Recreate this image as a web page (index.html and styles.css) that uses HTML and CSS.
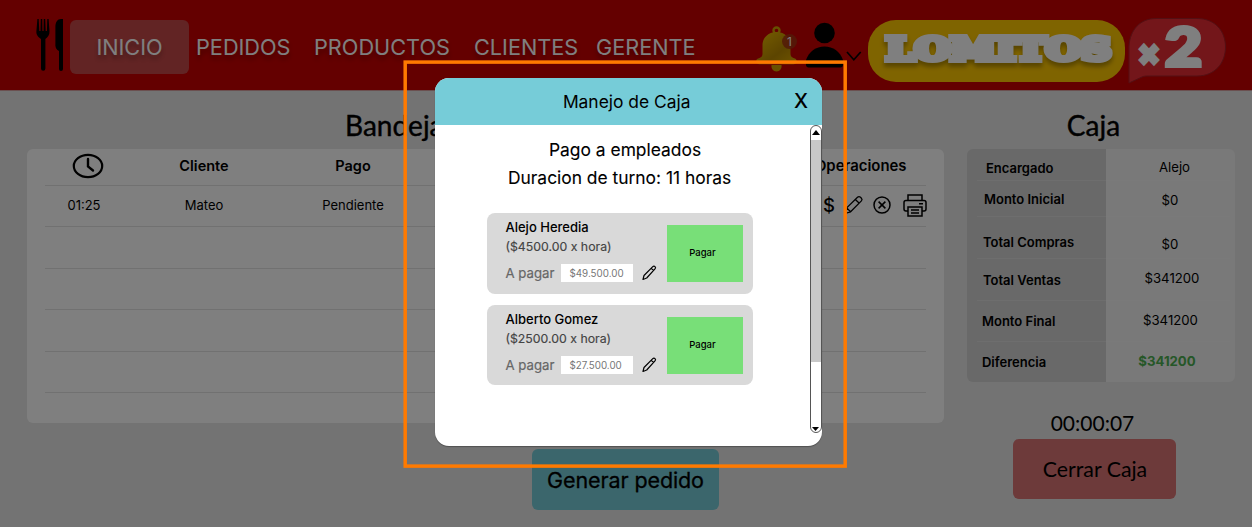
FILE: index.html
```html
<!DOCTYPE html>
<html lang="es">
<head>
<meta charset="utf-8">
<title>Lomitos x2 - Caja</title>
<link rel="stylesheet" href="styles.css">
</head>
<body>
<div class="app">
  <header class="topbar">
    <svg class="cutlery" width="28" height="54" viewBox="0 0 28 54">
      <path d="M1.4 1h1.3l.6 12h1.2L4.800 1h1.400l.2 12h1.200L7.800 1h1.400l.5 12h1.200L11.300 1h1.300l.9 12c.2 4-1.600 6-4.100 8v29.500a2.200 2.200 0 0 1-4.400 0V21C2.300 19 0 17 .4 13z"/>
      <path d="M27 1v50a2 2 0 0 1-4 0V33c-3-1.500-4-4-3.600-8V9c0-5 2-8 5.600-8z"/>
    </svg>
    <nav class="nav">
      <a class="nav-item active">INICIO</a>
      <a class="nav-item pedidos">PEDIDOS</a>
      <a class="nav-item productos">PRODUCTOS</a>
      <a class="nav-item clientes">CLIENTES</a>
      <a class="nav-item gerente">GERENTE</a>
    </nav>
    <div class="bell">
      <svg width="41" height="46" viewBox="0 0 41 46">
        <defs><linearGradient id="gold" x1="0" y1="0" x2="1" y2="1"><stop offset="0" stop-color="#efbd00"/><stop offset=".6" stop-color="#b98a00"/><stop offset="1" stop-color="#e0ac00"/></linearGradient></defs>
        <circle cx="20.500" cy="4.500" r="3" fill="none" stroke="#cfa000" stroke-width="2.400"/>
        <path d="M20.500 6c8.500 0 14 6 14 13v9c0 2 1 3 3 4 2 .5 3.200 1.300 3.200 3s-1 3.200-3.200 3.200H3.500C1.300 38.200.3 37 .3 35s1.200-2.500 3.200-3c2-1 3-2 3-4v-9c0-7 5.500-13 14-13z" fill="url(#gold)"/>
        <path d="M15.500 39h10c.5 3.500-1.500 6.500-5 6.500s-5.500-3-5-6.500z" fill="#d2a200"/>
      </svg>
      <span class="count">1</span>
    </div>
    <svg class="user" width="37" height="46" viewBox="0 0 37 46"><circle cx="18.500" cy="11" r="10.300"/><path d="M0 43V38c3-8.500 10-13.500 18.500-13.500S34 29.500 37 38v5c0 1.600-1 2.400-2.500 2.400h-32C1 45.400 0 44.600 0 43z"/></svg>
    <svg class="chevron" width="16" height="11" viewBox="0 0 16 11"><path d="M1 1l6.800 7.800L14.700 1" fill="none" stroke="#000" stroke-width="1.700"/></svg>
    <div class="brand">
      <svg width="257" height="62" viewBox="0 0 257 62"><text class="brand-text" x="18" y="39.800" textLength="225" lengthAdjust="spacingAndGlyphs">LOMITOS</text></svg>
    </div>
    <svg class="bubble" width="99" height="68" viewBox="0 0 99 68">
      <path d="M1 66V29C2 13 12 1.500 28 1.500h41C87 1.500 97.500 14 97.500 30S87 59 69 59H21c-3 0-5 0-7 1z" fill="#e62c34" stroke="#a82028" stroke-width="1"/>
      <text class="times" x="10" y="48" textLength="22" lengthAdjust="spacingAndGlyphs">×</text>
      <text class="two" x="37" y="48.500" textLength="37" lengthAdjust="spacingAndGlyphs">2</text>
    </svg>
  </header>

  <main class="content">
    <section class="orders">
      <h1 class="orders-title">Bandeja de entrada</h1>
      <div class="orders-card">
        <div class="row head">
          <span><svg class="clock" width="32" height="26" viewBox="0 0 32 26"><ellipse cx="16" cy="13" rx="14.200" ry="11.200" fill="none" stroke="#000" stroke-width="2.200"/><path d="M16 6v7.500l5 4" fill="none" stroke="#000" stroke-width="2.400" stroke-linecap="round"/></svg></span>
          <span>Cliente</span><span>Pago</span><span></span><span class="ops-title">Operaciones</span>
        </div>
        <div class="row">
          <span>01:25</span><span>Mateo</span><span>Pendiente</span><span></span>
          <span class="ops">
            <b class="dollar">$</b>
            <svg width="19" height="20" viewBox="0 0 19 20" fill="none" stroke="#000" stroke-width="1.300" stroke-linejoin="round"><path d="M1 18.500l1.700-5.600L13.500 2.300c1-1 2-1 3 0l.9.9c.8.800.8 1.800 0 2.700L6.600 16.800zM11.300 4.500l4 3.800M2.700 12.900l3.900 3.900"/></svg>
            <svg width="18" height="18" viewBox="0 0 18 18" fill="none" stroke="#000" stroke-width="1.500"><circle cx="9" cy="9" r="8"/><path d="M5.600 5.600l6.800 6.800M12.400 5.600l-6.800 6.800"/></svg>
            <svg width="24" height="23" viewBox="0 0 24 23" fill="none" stroke="#000" stroke-width="1.500"><path d="M5 6.500V1h14v5.500M5 17H3c-1.300 0-2-.7-2-2V8.500c0-1.300.7-2 2-2h18c1.300 0 2 .700 2 2V15c0 1.300-.7 2-2 2h-2M5 13h14v9H5zM8 16h8M8 19h8M16 9.700h4"/></svg>
          </span>
        </div>
        <div class="row"></div><div class="row"></div><div class="row"></div><div class="row"></div>
      </div>
      <button class="generate">Generar pedido</button>
    </section>

    <aside class="register">
      <h2 class="register-title">Caja</h2>
      <dl class="register-card">
        <div class="entry e1"><dt>Encargado</dt><dd>Alejo</dd></div>
        <div class="entry e2"><dt>Monto Inicial</dt><dd>$0</dd></div>
        <div class="entry e3"><dt>Total Compras</dt><dd>$0</dd></div>
        <div class="entry e4"><dt>Total Ventas</dt><dd>$341200</dd></div>
        <div class="entry e5"><dt>Monto Final</dt><dd>$341200</dd></div>
        <div class="entry e6"><dt>Diferencia</dt><dd class="diff">$341200</dd></div>
      </dl>
      <div class="timer">00:00:07</div>
      <button class="close-register">Cerrar Caja</button>
    </aside>
  </main>
</div>

<div class="backdrop"></div>
<div class="modal">
  <div class="modal-head"><span class="modal-title">Manejo de Caja</span><span class="modal-x">X</span></div>
  <div class="modal-body">
    <div class="modal-main">
      <p class="lead one">Pago a empleados</p>
      <p class="lead two-line">Duracion de turno: 11 horas</p>
      <div class="employee">
        <div class="info">
          <div class="name">Alejo Heredia</div>
          <div class="rate">($4500.00 x hora)</div>
          <div class="pay"><span class="label">A pagar</span><span class="amount">$49.500.00</span>
            <svg width="15" height="16" viewBox="0 0 15 16" fill="none" stroke="#000" stroke-width="1.200" stroke-linejoin="round"><path d="M1 14.500l1-4L10.800 1.700c.8-.8 1.500-.8 2.200-.1s.8 1.500 0 2.300L4.700 13zM9.300 3.300l2.300 2.300"/></svg></div>
        </div>
        <button class="pay-btn">Pagar</button>
      </div>
      <div class="employee">
        <div class="info">
          <div class="name second">Alberto Gomez</div>
          <div class="rate">($2500.00 x hora)</div>
          <div class="pay"><span class="label">A pagar</span><span class="amount">$27.500.00</span>
            <svg width="15" height="16" viewBox="0 0 15 16" fill="none" stroke="#000" stroke-width="1.200" stroke-linejoin="round"><path d="M1 14.500l1-4L10.800 1.700c.8-.8 1.500-.8 2.200-.1s.8 1.500 0 2.300L4.700 13zM9.300 3.300l2.300 2.300"/></svg></div>
        </div>
        <button class="pay-btn">Pagar</button>
      </div>
    </div>
    <div class="scrollbar">
      <svg width="8" height="5" viewBox="0 0 8 5"><path d="M0 5L4 0l4 5z"/></svg>
      <div class="thumb"></div>
      <svg width="7" height="4" viewBox="0 0 7 4"><path d="M0 0h7L3.500 4z"/></svg>
    </div>
  </div>
</div>
<svg class="frame" width="444" height="409" viewBox="0 0 444 409"><rect x="2.200" y="2.100" width="440" height="404" fill="none" stroke="#ff7a00" stroke-width="3.500"/></svg>
</body>
</html>
```

FILE: styles.css
```css
* { box-sizing: border-box; margin: 0; padding: 0; }
body { width: 1252px; height: 527px; overflow: hidden; position: relative; font-family: Inter, "Liberation Sans", sans-serif; color: #000; }
button { border: 0; font-family: inherit; color: #000; white-space: nowrap; }
svg { display: block; flex: none; overflow: visible; }
.app { width: 1252px; height: 527px; background: #e6e6e6; }

.topbar { height: 90.5px; background: linear-gradient(#c80000 90px, #d7a0a0 90px); display: flex; align-items: flex-start; padding-left: 36px; }
.cutlery { margin-top: 18px; }
.nav { display: flex; margin: 20px 0 0 6px; height: 54px; width: 686px; flex: none; }
.nav-item { font-size: 21.700px; line-height: 54px; color: #fff; text-shadow: 0 4px 4px rgba(0,0,0,.3); flex: none; }
.active { width: 119px; text-align: center; background: #c44848; border-radius: 6px; }
.pedidos { width: 118px; margin-left: 7px; }
.productos { width: 160px; }
.clientes { width: 122px; }
.bell { position: relative; margin-top: 26px; width: 41px; }
.count { position: absolute; left: 26px; top: 8px; width: 15px; height: 15px; border-radius: 50%; background: rgba(166,52,16,.85); color: #fff; font-size: 12px; line-height: 15px; text-align: center; }
.user { margin: 22px 0 0 9px; }
.chevron { margin: 51px 0 0 3px; }
.brand { width: 257px; height: 62px; margin: 20px 0 0 6px; border-radius: 28px; background: #ffc800; flex: none; }
.brand-text { font: bold 31px "DejaVu Serif", serif; fill: #fff; stroke: #fff; stroke-width: 6px; filter: drop-shadow(0 4px 2px rgba(0,0,0,.3)); }
.bubble { margin: 16.500px 0 0 2.500px; }
.times { font: 900 34px Inter, sans-serif; fill: #fff; stroke: #fff; stroke-width: 3px; }
.two { font: 900 54px Lato, sans-serif; fill: #fff; stroke: #fff; stroke-width: 4px; }

.content { display: flex; padding-left: 27px; }
.orders { width: 917.400px; height: 436px; }
.orders-title, .register-title { font-family: Lato, sans-serif; font-weight: 400; font-size: 28px; line-height: 34px; height: 58px; padding-top: 17px; -webkit-text-stroke: .4px #000; }
.orders-title { padding-left: 318px; }
.orders-card { height: 274.500px; background: #fff; border-radius: 6px; padding: 0 18px; }
.row { height: 41.500px; display: grid; grid-template-columns: 86px 146px 152px 378px 121px; align-items: center; text-align: center; border-bottom: 1px solid #e2e2e2; font-size: 13px; padding-bottom: 1px; }
.row span:first-child { padding-right: 8px; }
.head { height: 37px; font-size: 14.500px; font-weight: 600; padding-bottom: 2px; }
.clock { margin: 0 auto; position: relative; left: 4px; }
.ops-title { text-align: right; padding-right: 21.500px; font-size: 14.900px; }
.ops { display: flex; align-items: center; padding-left: 16px; }
.dollar { font-size: 18.500px; font-weight: 500; width: 21px; text-align: left; }
.ops svg:nth-of-type(2) { margin-left: 10px; }
.ops svg:nth-of-type(3) { margin-left: 11.500px; }
.generate { display: block; width: 187px; height: 61px; margin: 26px 0 0 505px; border-radius: 6px; background: #76ccd8; font-size: 21.500px; letter-spacing: -.1px; font-weight: 400; -webkit-text-stroke: .3px #000; }

.register { width: 268px; margin-left: 22.600px; }
.register-title { text-align: center; padding-right: 15px; }
.register-card { height: 233.500px; border-radius: 6px; background: linear-gradient(90deg, #d2d2d2 139px, #f2f2f2 139px); padding: 0 5px 0 10px; }
.entry { display: grid; grid-template-columns: 129px 124px; border-bottom: 1px solid rgba(255,255,255,.25); font-size: 13.200px; line-height: 20px; white-space: nowrap; }
.entry dt { font-weight: 600; font-size: 13px; padding-left: 6px; }
.entry dd { text-align: center; }
.e1 { height: 32.500px; padding-top: 8px; }
.e1 dt { padding: 1px 0 0 9px; }
.e1 dd { padding-left: 13px; }
.e2 { height: 36px; padding-top: 7.500px; }
.e2 dt { padding-left: 7px; }
.e2 dd { padding: 1px 0 0 4px; }
.e3 { height: 42px; padding-top: 14.500px; }
.e3 dd { padding: 2px 0 0 4px; }
.e4 { height: 41.500px; padding-top: 9px; }
.e4 dt { padding-top: 1.500px; }
.e4 dd { padding-left: 8px; }
.e5 { height: 41px; padding-top: 9px; }
.e5 dt, .e6 dt { padding: 1.500px 0 0 5px; }
.e5 dd { padding-left: 5px; }
.e6 { height: 40.500px; padding-top: 9px; border: 0; }
.diff { color: #4caf50; font-weight: 700; padding-right: 2px; }
.timer { margin-top: 28px; height: 29px; padding-right: 17px; line-height: 26px; text-align: center; font-size: 21px; font-family: Lato, sans-serif; }
.close-register { display: block; width: 163px; height: 60px; margin-left: 46.500px; border-radius: 6px; background: #da7474; font-family: Lato, sans-serif; font-size: 21.300px; }

.backdrop { position: absolute; inset: 0; background: rgba(0,0,0,.5); }
.modal { position: absolute; left: 435.400px; top: 77.700px; width: 386.500px; height: 368px; border-radius: 14px; background: #fff; box-shadow: 0 1px 1px rgba(0,0,0,.3); overflow: hidden; }
.modal-head { height: 47px; background: #76ccd8; display: flex; align-items: center; padding-left: 127.500px; }
.modal-title { font-size: 17.400px; width: 231px; }
.modal-x { font-size: 20px; font-weight: 500; }
.modal-body { display: flex; height: 321px; }
.modal-main { width: 374.500px; padding-left: 51.600px; }
.lead { font-size: 17.400px; line-height: 28px; white-space: nowrap; -webkit-text-stroke: .1px #000; }
.one { margin-top: 11.400px; padding-left: 62px; }
.two-line { padding-left: 21px; margin-bottom: 21px; }
.employee { width: 266px; height: 80.500px; margin-bottom: 11.200px; border-radius: 8px; background: #d9d9d9; display: flex; padding: 5px 10px 0 18.500px; }
.info { width: 161.500px; }
.name { font-size: 13px; line-height: 19px; font-weight: 500; }
.rate { font-size: 12.300px; line-height: 19px; color: #444; -webkit-text-stroke: .15px #444; }
.pay { display: flex; align-items: center; height: 18px; margin-top: 8px; }
.label { width: 56px; font-size: 13.200px; color: #666; -webkit-text-stroke: .2px #666; }
.amount { width: 72px; height: 18px; background: #fff; color: #777; font-size: 9.800px; line-height: 19px; padding-left: 8px; margin-right: 9px; }
.pay-btn { width: 76px; height: 57px; margin-top: 7px; padding: 0 5px 2px 0; background: #78df78; font-size: 9.500px; font-weight: 500; }
.scrollbar { width: 12px; height: 308px; border: 1px solid #555; border-radius: 6px; display: flex; flex-direction: column; align-items: center; justify-content: space-between; padding: 4px 0 1px; background: #fff; }
.thumb { width: 10px; height: 222px; margin: 5px 0 auto; background: #c8c8c8; }
.frame { position: absolute; left: 403px; top: 60px; }
```
